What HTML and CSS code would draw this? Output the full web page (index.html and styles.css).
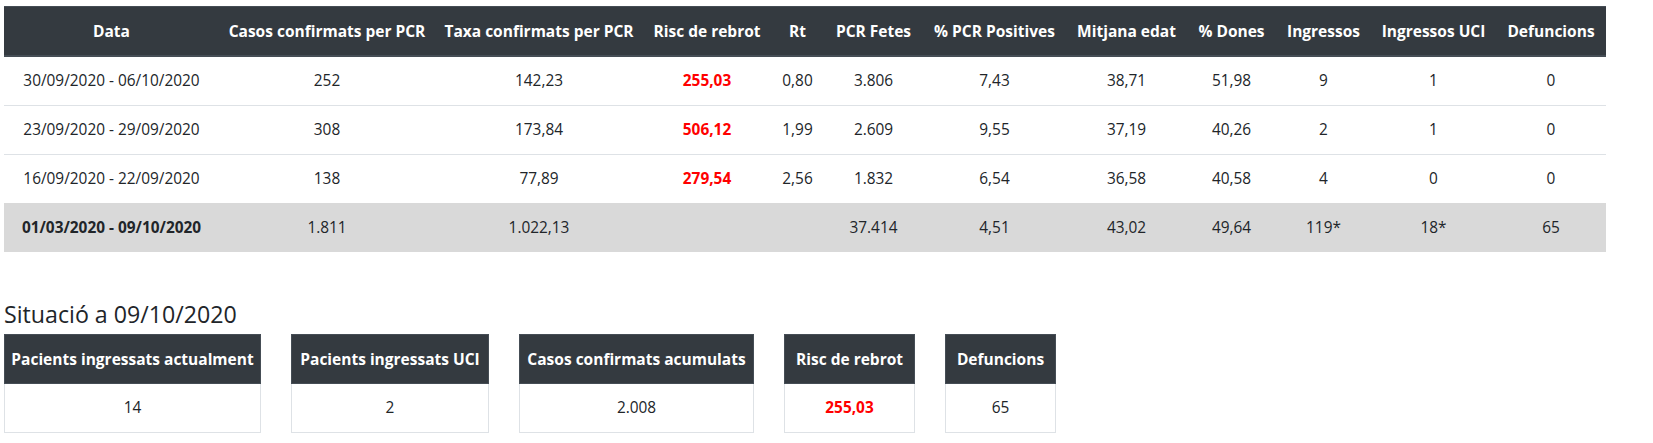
FILE: index.html
```html
<!DOCTYPE html>
<html lang="ca">
<head>
<meta charset="utf-8">
<title>Situació COVID</title>
<link rel="stylesheet" href="styles.css">
</head>
<body>
<main class="page">
  <table class="weekly">
    <colgroup>
      <col class="c-data"><col class="c-casos"><col class="c-taxa"><col class="c-risc"><col class="c-rt"><col class="c-fetes"><col class="c-pos"><col class="c-edat"><col class="c-dones"><col class="c-ingr"><col class="c-uci"><col class="c-def">
    </colgroup>
    <thead>
      <tr>
        <th>Data</th>
        <th>Casos confirmats per PCR</th>
        <th>Taxa confirmats per PCR</th>
        <th>Risc de rebrot</th>
        <th>Rt</th>
        <th>PCR Fetes</th>
        <th>% PCR Positives</th>
        <th>Mitjana edat</th>
        <th>% Dones</th>
        <th>Ingressos</th>
        <th>Ingressos UCI</th>
        <th>Defuncions</th>
      </tr>
    </thead>
    <tbody>
      <tr>
        <td>30/09/2020 - 06/10/2020</td><td>252</td><td>142,23</td><td class="risk">255,03</td><td>0,80</td><td>3.806</td><td>7,43</td><td>38,71</td><td>51,98</td><td>9</td><td>1</td><td>0</td>
      </tr>
      <tr>
        <td>23/09/2020 - 29/09/2020</td><td>308</td><td>173,84</td><td class="risk">506,12</td><td>1,99</td><td>2.609</td><td>9,55</td><td>37,19</td><td>40,26</td><td>2</td><td>1</td><td>0</td>
      </tr>
      <tr>
        <td>16/09/2020 - 22/09/2020</td><td>138</td><td>77,89</td><td class="risk">279,54</td><td>2,56</td><td>1.832</td><td>6,54</td><td>36,58</td><td>40,58</td><td>4</td><td>0</td><td>0</td>
      </tr>
      <tr class="total">
        <td class="total-label">01/03/2020 - 09/10/2020</td><td>1.811</td><td>1.022,13</td><td></td><td></td><td>37.414</td><td>4,51</td><td>43,02</td><td>49,64</td><td>119*</td><td>18*</td><td>65</td>
      </tr>
    </tbody>
  </table>

  <h4 class="situacio-title">Situació a 09/10/2020</h4>

  <div class="cards">
    <div class="card card-ingressats">
      <div class="card-head">Pacients ingressats actualment</div>
      <div class="card-body">14</div>
    </div>
    <div class="card card-uci">
      <div class="card-head">Pacients ingressats UCI</div>
      <div class="card-body">2</div>
    </div>
    <div class="card card-casos">
      <div class="card-head">Casos confirmats acumulats</div>
      <div class="card-body">2.008</div>
    </div>
    <div class="card card-risc">
      <div class="card-head">Risc de rebrot</div>
      <div class="card-body risk">255,03</div>
    </div>
    <div class="card card-def">
      <div class="card-head">Defuncions</div>
      <div class="card-body">65</div>
    </div>
  </div>
</main>
</body>
</html>
```

FILE: styles.css
```css
html, body {
  margin: 0;
  padding: 0;
  background: #ffffff;
}

body {
  font-family: "Open Sans", "Noto Sans", sans-serif;
  font-size: 15.4px;
  line-height: 24px;
  color: #212529;
}

.page {
  padding: 6px 4px 0 4px;
}

/* ---------- main weekly table ---------- */
.weekly {
  border-collapse: collapse;
  table-layout: fixed;
  width: 1602px;
}

.c-data  { width: 215px; }
.c-casos { width: 216px; }
.c-taxa  { width: 208px; }
.c-risc  { width: 128px; }
.c-rt    { width: 53px; }
.c-fetes { width: 99px; }
.c-pos   { width: 143px; }
.c-edat  { width: 121px; }
.c-dones { width: 89px; }
.c-ingr  { width: 95px; }
.c-uci   { width: 125px; }
.c-def   { width: 110px; }

.weekly th,
.weekly td {
  padding: 12px 0;
  height: 24px;
  text-align: center;
  white-space: nowrap;
  vertical-align: middle;
}

.weekly thead th {
  background: #343a40;
  color: #ffffff;
  font-weight: 700;
  font-size: 15.5px;
  border-top: 1px solid #454d55;
  border-bottom: 2px solid #454d55;
}

.weekly tbody td {
  border-top: 1px solid #dee2e6;
}

.risk {
  color: #ff0000;
  font-weight: 700;
}

.weekly .total td {
  background: #d9d9d9;
  border-top: 1px solid #d9d9d9;
}

.weekly .total .total-label {
  font-weight: 700;
}

/* ---------- situation section ---------- */
.situacio-title {
  margin: 48px 0 6px 0;
  font-size: 23.2px;
  line-height: 28px;
  font-weight: 500;
  color: #212529;
}

.cards {
  display: flex;
  align-items: flex-start;
  gap: 30px;
}

.card {
  display: flex;
  flex-direction: column;
  box-sizing: border-box;
}

.card-ingressats { width: 257px; }
.card-uci        { width: 198px; }
.card-casos      { width: 235px; }
.card-risc       { width: 131px; }
.card-def        { width: 111px; }

.card-head {
  box-sizing: border-box;
  height: 50px;
  line-height: 48px;
  background: #343a40;
  color: #ffffff;
  font-weight: 700;
  font-size: 15.5px;
  text-align: center;
  white-space: nowrap;
  border: 1px solid #454d55;
}

.card-body {
  box-sizing: border-box;
  height: 49px;
  line-height: 48px;
  text-align: center;
  border: 1px solid #dee2e6;
  border-top: none;
}
```
